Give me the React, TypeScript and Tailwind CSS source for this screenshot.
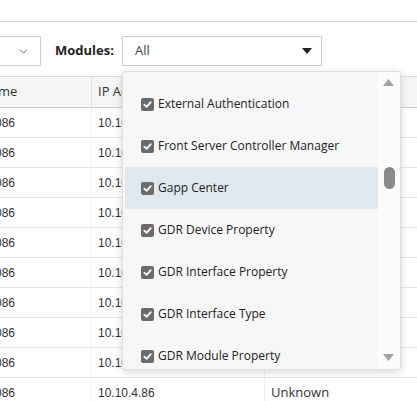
import { ChevronDown } from "lucide-react";

const rows = Array.from({ length: 10 }, () => ({ name: "1086", ip: "10.10.4.86", status: "Unknown" }));

const modules = [
  "External Authentication",
  "Front Server Controller Manager",
  "Gapp Center",
  "GDR Device Property",
  "GDR Interface Property",
  "GDR Interface Type",
  "GDR Module Property",
];

function Check() {
  return (
    <span className="flex h-[13px] w-[13px] shrink-0 items-center justify-center rounded-[2px] bg-[#6b6b6b]">
      <svg width="9" height="9" viewBox="0 0 10 10">
        <path d="M1.5 5.2 L4 7.6 L8.6 2.4" fill="none" stroke="white" strokeWidth="2" strokeLinecap="round" strokeLinejoin="round" />
      </svg>
    </span>
  );
}

export default function App() {
  return (
    <div className="relative h-[401px] w-[417px] overflow-hidden bg-white font-['Open_Sans',sans-serif] text-[13px] text-[#333]">
      <div className="h-[22px] border-b border-[#d4d4d4]" />

      {/* toolbar */}
      <div className="flex h-[54px] items-start pt-[14px]">
        <div className="ml-[-40px] flex h-[30px] w-[81px] items-center justify-end border border-[#cfcfcf] pr-[10px]">
          <ChevronDown size={13} strokeWidth={1.5} className="text-[#444]" />
        </div>
        <span className="ml-[14px] mt-[5px] font-bold text-[#222]">Modules:</span>
        <div className="ml-auto mr-[95px] flex h-[30px] w-[200px] items-center justify-between border border-[#cfcfcf] pl-[12px] pr-[9px]">
          <span className="text-[#444]">All</span>
          <svg width="10" height="6" viewBox="0 0 10 6">
            <path d="M0 0 L10 0 L5 6 Z" fill="#222" />
          </svg>
        </div>
      </div>

      {/* table */}
      <div className="ml-[-27px] w-[460px]">
        <div className="flex h-[32px] items-center border-y border-[#dcdcdc] border-b-[#cfcfcf] bg-[#f5f5f5]">
          <div className="flex h-full w-[119px] items-center border-r border-[#e2e2e2] pl-[8px]">Name</div>
          <div className="flex h-full w-[173px] items-center border-r border-[#e2e2e2] pl-[6px]">IP Address</div>
          <div className="flex h-full flex-1 items-center pl-[6px]">Status</div>
        </div>
        {rows.map((r, i) => (
          <div key={i} className="flex h-[30px] items-center border-b border-[#e6e6e6] font-['Liberation_Sans',sans-serif] text-[12px] text-[#333]">
            <div className="flex h-full w-[119px] items-center justify-end border-r border-[#f0f0f0] pr-[76px]">{r.name}</div>
            <div className="flex h-full w-[173px] items-center border-r border-[#f0f0f0] pl-[6px]">{r.ip}</div>
            <div className="flex h-full flex-1 items-center pl-[6px] font-['Open_Sans',sans-serif] text-[13px]">{r.status}</div>
          </div>
        ))}
      </div>

      {/* dropdown */}
      <div className="absolute left-[122px] top-[71px] flex h-[299px] w-[279px] overflow-hidden rounded-[3px] border border-[#dedede] bg-[#f7f7f7] shadow-[0_2px_8px_rgba(0,0,0,0.16)]">
        <div className="flex-1 pl-[2px] pt-[11px]">
          {modules.map((m) => (
            <div
              key={m}
              className={`flex h-[42px] items-center gap-[4px] pl-[16px] text-[12px] text-[#222] ${m === "Gapp Center" ? "bg-[#dfe8ef]" : ""}`}
            >
              <Check />
              <span>{m}</span>
            </div>
          ))}
        </div>
        <div className="relative w-[22px] bg-[#fbfbfb]">
          <svg className="absolute left-[5px] top-[7px]" width="11" height="7" viewBox="0 0 11 7">
            <path d="M0 7 L11 7 L5.5 0 Z" fill="#a3a3a3" />
          </svg>
          <div className="absolute left-[6px] top-[95px] h-[22px] w-[11px] rounded-full bg-[#8a8a8a]" />
          <svg className="absolute bottom-[8px] left-[5px]" width="11" height="7" viewBox="0 0 11 7">
            <path d="M0 0 L11 0 L5.5 7 Z" fill="#a3a3a3" />
          </svg>
        </div>
      </div>
    </div>
  );
}
